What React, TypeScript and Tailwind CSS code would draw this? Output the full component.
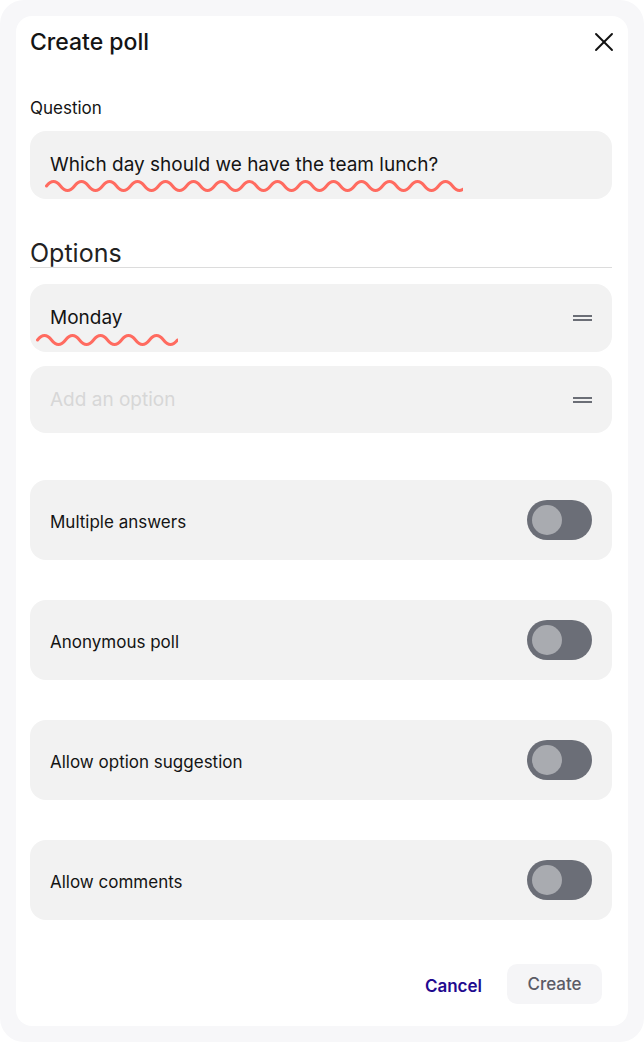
import { X } from 'lucide-react';

const font = { fontFamily: 'Inter, "Noto Sans", sans-serif' };

function wavePath(width: number, period = 28) {
  const half = period / 2;
  const n = Math.ceil(width / half);
  let d = `M1.5 8 q ${half / 2} -9 ${half} 0`;
  for (let i = 1; i < n; i++) d += ` t ${half} 0`;
  return d;
}

function Squiggle({ width, className }: { width: number; className: string }) {
  return (
    <svg
      width={width + 3}
      height={16}
      viewBox={`0 0 ${width + 3} 16`}
      className={`pointer-events-none absolute ${className}`}
    >
      <path
        d={wavePath(width)}
        fill="none"
        stroke="#ff6b60"
        strokeWidth={3}
        strokeLinecap="round"
        strokeLinejoin="round"
      />
    </svg>
  );
}

function DragHandle() {
  return (
    <div className="flex w-[19px] flex-col gap-[2px]">
      <span className="block h-[2px] w-full bg-[#6b6e76]" />
      <span className="block h-[2px] w-full bg-[#6b6e76]" />
    </div>
  );
}

function Toggle() {
  return (
    <div className="flex h-[40px] w-[65px] items-center rounded-full bg-[#6b6e77] px-[5px]">
      <div className="h-[30px] w-[30px] rounded-full bg-[#a9abb0]" />
    </div>
  );
}

const settings = ['Multiple answers', 'Anonymous poll', 'Allow option suggestion', 'Allow comments'];

export default function App() {
  return (
    <div className="bg-white" style={font}>
      <div className="h-[1042px] rounded-[24px] bg-[#f7f7f9] p-4">
        <div className="flex h-full flex-col rounded-2xl bg-white pl-[14px] pr-4 pt-3 text-[#141414]">
          {/* header */}
          <div className="flex h-7 items-center justify-between">
            <h1 className="text-[23px] font-medium leading-7">Create poll</h1>
            <button className="mr-[-8px] text-[#111]">
              <X className="h-8 w-8" strokeWidth={1.4} />
            </button>
          </div>

          <label className="mt-10 block text-[17px] leading-6">Question</label>
          <div className="relative mt-[11px] flex h-[68px] items-center rounded-2xl bg-[#f2f2f2] px-5">
            <span className="text-[19px] leading-6">Which day should we have the team lunch?</span>
            <Squiggle width={415} className="left-[15px] top-[47px]" />
          </div>

          <h2 className="mt-10 border-b border-[#dcdcdc] text-[25px] font-normal leading-[28px] text-[#222]">
            Options
          </h2>

          <div className="mt-4 flex flex-col gap-[14px]">
            <div className="relative flex h-[68px] items-center justify-between rounded-2xl bg-[#f2f2f2] px-5">
              <span className="text-[19px] leading-6">Monday</span>
              <DragHandle />
              <Squiggle width={139} className="left-[6px] top-[48px]" />
            </div>
            <div className="flex h-[67px] items-center justify-between rounded-2xl bg-[#f2f2f2] px-5">
              <span className="text-[19px] leading-6 text-[#d7d7d7]">Add an option</span>
              <DragHandle />
            </div>
          </div>

          <div className="mt-[47px] flex flex-col gap-10">
            {settings.map((s) => (
              <div key={s} className="flex h-20 items-center justify-between rounded-2xl bg-[#f2f2f2] px-5">
                <span className="pt-[3px] text-[17px] leading-6">{s}</span>
                <Toggle />
              </div>
            ))}
          </div>

          <div className="mt-[44px] flex items-center justify-end gap-[13px] pr-[10px]">
            <button className="px-3 pt-[5px] text-[17px] font-semibold text-[#1f0a8f]">Cancel</button>
            <button className="h-10 w-[95px] rounded-[10px] bg-[#f5f5f7] pt-[2px] text-[17px] font-medium text-[#5b5b66]">
              Create
            </button>
          </div>
        </div>
      </div>
    </div>
  );
}
